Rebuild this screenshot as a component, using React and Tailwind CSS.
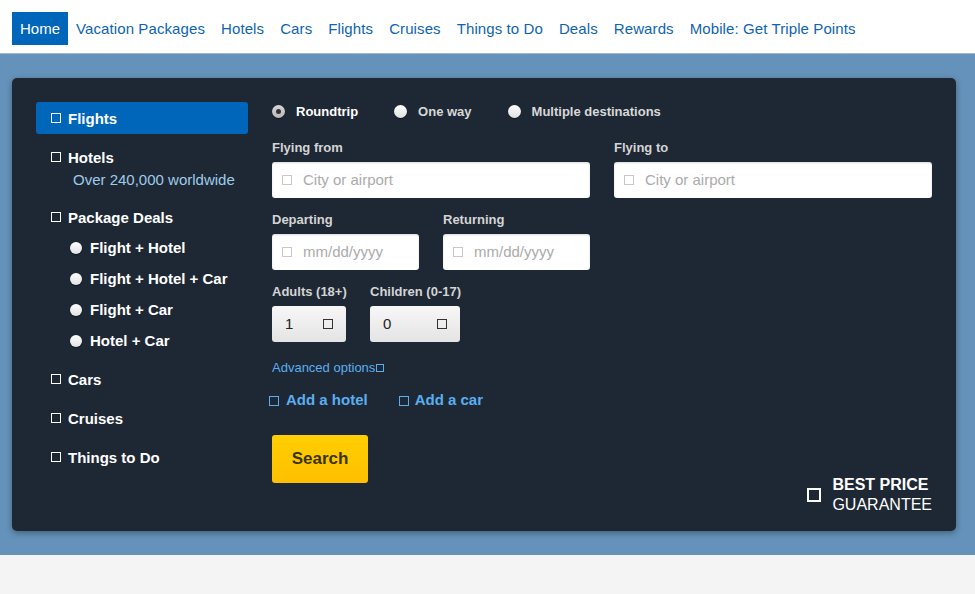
const navItems = ['Vacation Packages', 'Hotels', 'Cars', 'Flights', 'Cruises', 'Things to Do', 'Deals', 'Rewards', 'Mobile: Get Triple Points'];
const packages = ['Flight + Hotel', 'Flight + Hotel + Car', 'Flight + Car', 'Hotel + Car'];

const Box = ({ className = '' }) => (
  <span className={`inline-block shrink-0 w-[10px] h-[10px] border ${className}`} />
);

const Dot = () => (
  <span className="inline-block shrink-0 w-3 h-3 rounded-full bg-gradient-to-b from-white to-[#e2e2e2] shadow-[0_1px_1px_rgba(0,0,0,0.5)]" />
);

const Radio = ({ checked, label }) => (
  <label className="flex items-center gap-[11px]">
    {checked ? (
      <span className="w-[13px] h-[13px] rounded-full bg-gradient-to-b from-[#d6d6d6] to-[#b8b8b8] flex items-center justify-center shadow-[0_1px_1px_rgba(0,0,0,0.5)]">
        <span className="w-[5px] h-[5px] rounded-full bg-[#333]" />
      </span>
    ) : (
      <span className="w-[13px] h-[13px] rounded-full bg-gradient-to-b from-white to-[#e0e0e0] shadow-[0_1px_1px_rgba(0,0,0,0.5)]" />
    )}
    <span className={`text-[13px] font-bold ${checked ? 'text-white' : 'text-[#d8d8d8]'}`}>{label}</span>
  </label>
);

const Field = ({ label, width, placeholder }) => (
  <div className={`flex flex-col ${width}`}>
    <span className="text-[13px] font-bold text-[#d4d4d4] leading-[17px] mb-[6px]">{label}</span>
    <div className="h-9 bg-white rounded-[3px] flex items-center pl-[10px] gap-[11px] shadow-[inset_0_1px_2px_rgba(0,0,0,0.15)]">
      <Box className="border-[#c8c8c8]" />
      <span className="text-[15px] text-[#ababab] pt-px">{placeholder}</span>
    </div>
  </div>
);

const Select = ({ label, width, value }) => (
  <div className={`flex flex-col ${width}`}>
    <span className="text-[13px] font-bold text-[#d4d4d4] leading-[17px] mb-[6px] whitespace-nowrap">{label}</span>
    <div className="h-9 rounded-[3px] bg-gradient-to-b from-[#f7f7f7] to-[#e4e4e4] flex items-center justify-between pl-[13px] pr-[13px]">
      <span className="text-[15px] text-[#222] pt-px">{value}</span>
      <Box className="border-[#333]" />
    </div>
  </div>
);

const SideItem = ({ label, active, children }) => (
  <li>
    <div className={`h-8 flex items-center gap-[7px] pl-[15px] rounded-[3px] ${active ? 'bg-[#0066b9]' : ''}`}>
      <Box className="border-white" />
      <span className="text-[15px] font-bold text-white pt-[2px]">{label}</span>
    </div>
    {children}
  </li>
);

export default function App() {
  return (
    <div className="min-h-[594px] bg-[#f4f4f4]" style={{ fontFamily: '"Liberation Sans", Arial, sans-serif' }}>
      <nav className="h-[54px] bg-white border-b border-[#a3b8cc] flex items-start pt-3 pl-3">
        <a className="h-[33px] px-2 pt-px flex items-center bg-[#0066b9] text-white text-[15px]">Home</a>
        {navItems.map((n) => (
          <a key={n} className="h-[33px] px-2 pt-px flex items-center text-[#0e64b4] text-[15px] tracking-[0.1px]">{n}</a>
        ))}
      </nav>

      <section className="bg-[#6592ba] px-3 py-6">
        <div className="w-[944px] h-[453px] bg-[#1e2834] rounded-[5px] shadow-[0_2px_6px_rgba(0,0,0,0.35)] pt-6 px-6 pb-4 flex gap-6">
          <ul className="w-[212px] flex flex-col gap-[7px]">
            <SideItem label="Flights" active />
            <SideItem label="Hotels">
              <div className="-mt-[1px] pl-[37px] pb-[6px] text-[15px] leading-4 text-[#9fcbea]">Over 240,000 worldwide</div>
            </SideItem>
            <SideItem label="Package Deals">
              <ul className="-mt-[1px]">
                {packages.map((p) => (
                  <li key={p} className="h-[31px] flex items-center gap-2 pl-[34px]">
                    <Dot />
                    <span className="text-[15px] font-bold text-white pt-px">{p}</span>
                  </li>
                ))}
              </ul>
            </SideItem>
            <SideItem label="Cars" />
            <SideItem label="Cruises" />
            <SideItem label="Things to Do" />
          </ul>

          <div className="flex-1 flex flex-col">
            <div className="h-[18px] flex items-center gap-9 pt-px">
              <Radio checked label="Roundtrip" />
              <Radio label="One way" />
              <Radio label="Multiple destinations" />
            </div>

            <div className="mt-[19px] flex gap-6">
              <Field label="Flying from" width="w-[318px]" placeholder="City or airport" />
              <Field label="Flying to" width="w-[318px]" placeholder="City or airport" />
            </div>

            <div className="mt-[13px] flex gap-6">
              <Field label="Departing" width="w-[147px]" placeholder="mm/dd/yyyy" />
              <Field label="Returning" width="w-[147px]" placeholder="mm/dd/yyyy" />
            </div>

            <div className="mt-[13px] flex gap-6">
              <Select label="Adults (18+)" width="w-[74px]" value="1" />
              <Select label="Children (0-17)" width="w-[90px]" value="0" />
            </div>

            <a className="mt-[17px] h-4 pt-px flex items-center text-[13px] text-[#5aaef0]">
              Advanced options<span className="inline-block w-2 h-2 border border-[#5aaef0] ml-px" />
            </a>

            <div className="mt-4 h-[18px] flex items-center gap-[31px] -ml-[3px] pt-px">
              <a className="flex items-center gap-[7px] text-[15px] font-bold text-[#5aaef0]">
                <Box className="border-[#5aaef0]" />Add a hotel
              </a>
              <a className="flex items-center gap-[6px] text-[15px] font-bold text-[#5aaef0]">
                <Box className="border-[#5aaef0]" />Add a car
              </a>
            </div>

            <div className="mt-[26px] flex justify-between items-start">
              <button className="w-24 h-12 rounded-[3px] bg-gradient-to-b from-[#ffcf00] to-[#ffbf00] text-[17px] font-bold text-[#3a3400]">
                Search
              </button>
              <div className="mt-10 flex items-center gap-[11px]">
                <span className="w-[14px] h-[14px] border-2 border-white" />
                <div className="text-white text-[16px] leading-5">
                  <div className="font-bold">BEST PRICE</div>
                  <div>GUARANTEE</div>
                </div>
              </div>
            </div>
          </div>
        </div>
      </section>
    </div>
  );
}
